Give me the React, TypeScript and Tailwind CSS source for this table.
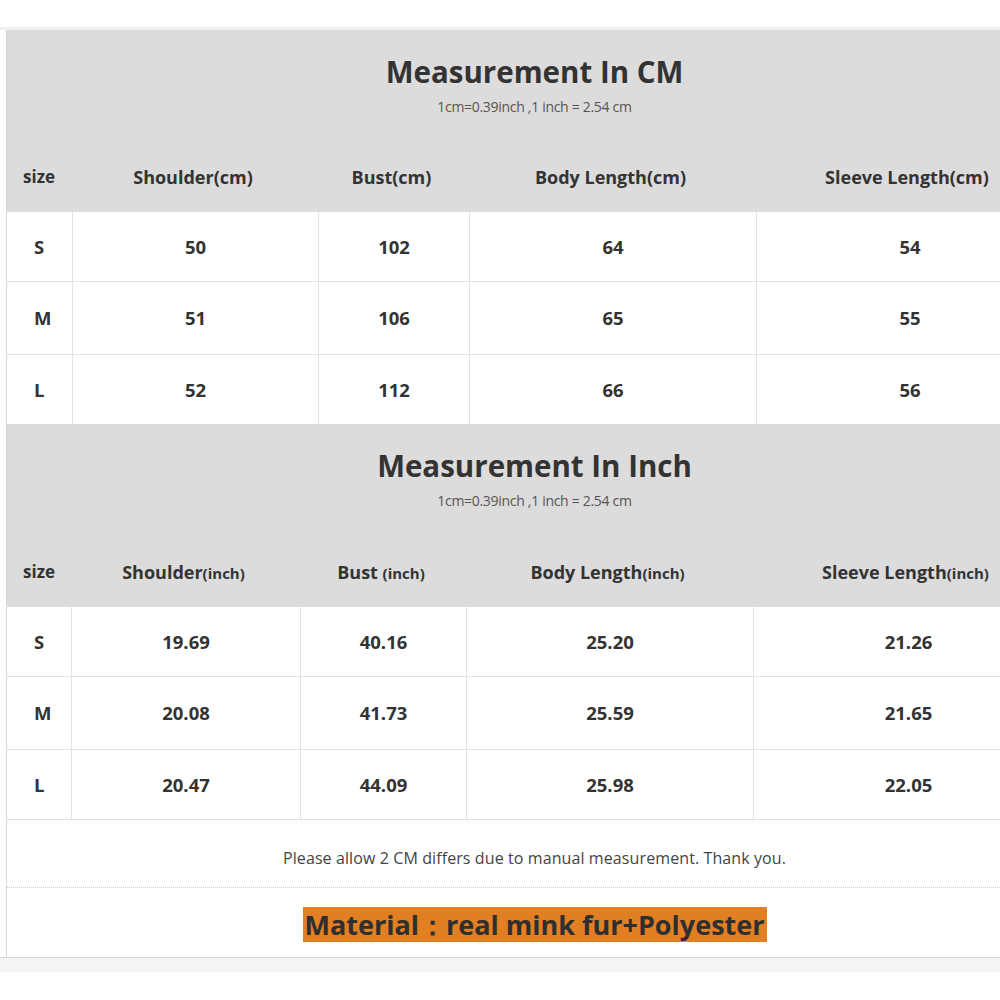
import React from "react";

const font = { fontFamily: '"Open Sans", "Noto Sans", sans-serif' };

type Table = {
  title: string;
  cols: string[];
  headH: string;
  heads: { main: string; unit?: string }[];
  rows: string[][];
};

const cm: Table = {
  title: "Measurement In CM",
  cols: ["66px", "246px", "151px", "287px", "306px"],
  headH: "h-[182px]",
  heads: [
    { main: "Shoulder(cm)" },
    { main: "Bust(cm)" },
    { main: "Body Length(cm)" },
    { main: "Sleeve Length(cm)" },
  ],
  rows: [
    ["S", "50", "102", "64", "54"],
    ["M", "51", "106", "65", "55"],
    ["L", "52", "112", "66", "56"],
  ],
};

const inch: Table = {
  title: "Measurement In Inch",
  cols: ["65px", "229px", "166px", "287px", "309px"],
  headH: "h-[183px]",
  heads: [
    { main: "Shoulder", unit: "(inch)" },
    { main: "Bust ", unit: "(inch)" },
    { main: "Body Length", unit: "(inch)" },
    { main: "Sleeve Length", unit: "(inch)" },
  ],
  rows: [
    ["S", "19.69", "40.16", "25.20", "21.26"],
    ["M", "20.08", "41.73", "25.59", "21.65"],
    ["L", "20.47", "44.09", "25.98", "22.05"],
  ],
};

const rowHeights = ["h-[70px]", "h-[73px]", "h-[69px]"];

function SizeTable({ t }: { t: Table }) {
  const tpl = { gridTemplateColumns: t.cols.join(" ") };
  return (
    <div>
      {/* cabecera gris */}
      <div className={`bg-[#dcdcdc] ${t.headH} flex flex-col`}>
        <div className="pt-[25px] text-center">
          <div className="text-[29.5px] leading-[34px] font-bold text-[#333]">{t.title}</div>
          <div className="text-[14px] leading-[20px] text-[#555] mt-[8px] tracking-[-0.3px]">
            1cm=0.39inch ,1 inch = 2.54 cm
          </div>
        </div>
        <div className="grid mt-auto h-[70px] items-center" style={tpl}>
          <div className="pl-[16px] text-[17px] font-bold text-[#333]">size</div>
          {t.heads.map((h, i) => (
            <div key={i} className="text-center text-[18px] font-bold text-[#333] pr-[6px] whitespace-pre">
              {h.main}
              {h.unit && <span className="text-[15px]">{h.unit}</span>}
            </div>
          ))}
        </div>
      </div>
      {/* filas */}
      {t.rows.map((r, i) => (
        <div
          key={i}
          className={`grid ${rowHeights[i]} ${i < 2 ? "border-b border-[#e2e2e2]" : ""}`}
          style={tpl}
        >
          {r.map((v, j) => (
            <div
              key={j}
              className={`flex items-center ${j === 0 ? "pl-[27px]" : "justify-center"} text-[18.5px] font-bold text-[#333] ${j < 4 ? "border-r border-[#e2e2e2]" : ""}`}
            >
              {v}
            </div>
          ))}
        </div>
      ))}
    </div>
  );
}

export default function App() {
  return (
    <div className="w-[1000px] h-[1000px] overflow-hidden bg-white" style={font}>
      <div className="h-[27px]" />
      <div className="h-[3px] bg-[#efefef]" />
      <div className="ml-[6px] w-[1056px] border-l border-[#d8d8d8]">
        <SizeTable t={cm} />
        <SizeTable t={inch} />
        <div className="border-t border-[#e2e2e2] h-[68px] flex items-center justify-center pt-[8px] text-[16px] text-[#444] tracking-[0.1px]">
          Please allow 2 CM differs due to manual measurement. Thank you.
        </div>
        <div className="border-t border-dotted border-[#d0d0d0] h-[70px] flex items-center justify-center pt-[3px]">
          <span className="bg-[#e27f22] text-[#2f2f2f] text-[27px] leading-[35px] font-bold px-[2px]">
            Material：real mink fur+Polyester
          </span>
        </div>
      </div>
      <div className="h-[1px] bg-[#d8d8d8]" />
      <div className="h-[14px] bg-[#f4f4f4]" />
    </div>
  );
}
